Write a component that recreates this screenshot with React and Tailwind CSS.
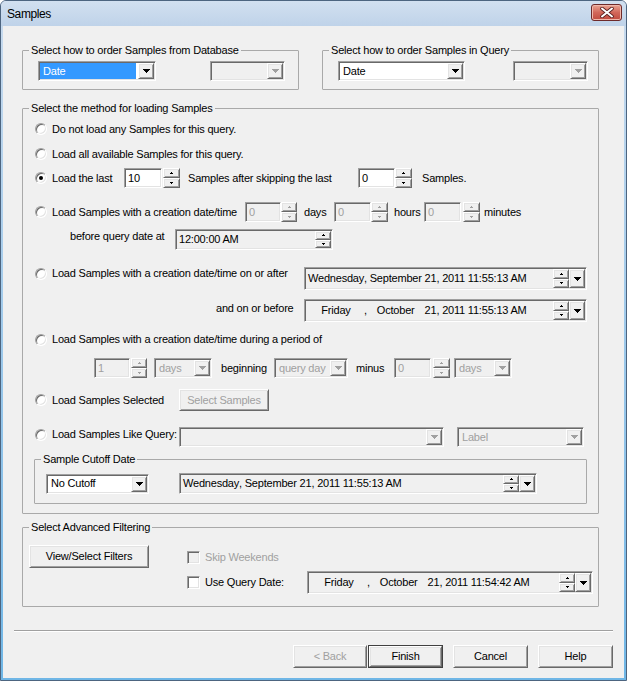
import React from "react";

// classic 3D borders
const sunken =
  "border border-t-[#a0a0a0] border-l-[#a0a0a0] border-b-white border-r-white shadow-[inset_1px_1px_0_#696969,inset_-1px_-1px_0_#e3e3e3]";
const raised =
  "border border-t-white border-l-white border-b-[#696969] border-r-[#696969] shadow-[inset_1px_1px_0_#e3e3e3,inset_-1px_-1px_0_#a0a0a0] bg-[#f0f0f0]";

// pixel triangle used on combo / spinner buttons
const Tri = ({ up, w = 7, color = "#000" }) => {
  const rows = Math.ceil(w / 2);
  return (
    <svg width={w} height={rows} shapeRendering="crispEdges" className="block">
      {Array.from({ length: rows }).map((_, i) => (
        <rect key={i} x={i} y={up ? rows - 1 - i : i} width={w - 2 * i} height={1} fill={color} />
      ))}
    </svg>
  );
};

const UpDown = ({ className = "", disabled }) => {
  const c = disabled ? "#a0a0a0" : "#000";
  return (
    <div className={`flex flex-col shrink-0 ${className}`}>
      <div className={`${raised} flex-1 flex items-center justify-center`}>
        <Tri up w={3} color={c} />
      </div>
      <div className={`${raised} flex-1 flex items-center justify-center`}>
        <Tri w={3} color={c} />
      </div>
    </div>
  );
};

const Spin = ({ value, disabled, inputClass = "w-[37px]", spinClass = "ml-[1px] w-[17px]" }) => (
  <div className="flex h-[20px] shrink-0">
    <div
      className={`${sunken} ${inputClass} px-[3px] flex items-center ${
        disabled ? "bg-[#f0f0f0] text-[#a0a0a0]" : "bg-white"
      }`}
    >
      {value}
    </div>
    <UpDown className={spinClass} disabled={disabled} />
  </div>
);

const Combo = ({ value, className = "", disabled, selected }) => (
  <div
    className={`${sunken} flex p-[1px] shrink-0 ${disabled ? "bg-[#f0f0f0] text-[#a0a0a0]" : "bg-white"} ${className}`}
  >
    <div className="flex-1 flex items-stretch pr-[2px] overflow-hidden">
      {selected ? (
        <span className="flex-1 flex items-center pl-[3px] bg-[#3399ff] text-white">{value}</span>
      ) : (
        <span className="flex items-center pl-[3px]">{value}</span>
      )}
    </div>
    <div className={`${raised} w-[16px] flex items-center justify-center`}>
      <Tri w={7} color={disabled ? "#a0a0a0" : "#000"} />
    </div>
  </div>
);

const DateField = ({ dow, month, rest, className = "" }) => (
  <div className={`${sunken} bg-[#f0f0f0] flex p-[1px] shrink-0 ${className}`}>
    <div className="flex-1 flex items-center pl-[2px] whitespace-nowrap overflow-hidden">
      <span className="inline-block w-[56px] text-center">{dow}</span>
      <span>,&nbsp;</span>
      <span className="inline-block w-[52px] text-center">{month}</span>
      <span>&nbsp;{rest}</span>
    </div>
    <UpDown className="w-[16px]" />
    <div className={`${raised} w-[16px] flex items-center justify-center`}>
      <Tri w={7} />
    </div>
  </div>
);

const Radio = ({ checked }) => (
  <span
    className={`w-[12px] h-[12px] rounded-full bg-white shrink-0 flex items-center justify-center ${sunken}`}
  >
    {checked && <span className="w-[4px] h-[4px] rounded-full bg-black" />}
  </span>
);

const RadioLabel = ({ checked, children, className = "" }) => (
  <div className={`flex items-center shrink-0 ${className}`}>
    <Radio checked={checked} />
    <span className="ml-[5px] whitespace-nowrap">{children}</span>
  </div>
);

const Check = ({ disabled }) => (
  <span className={`w-[13px] h-[13px] shrink-0 ${sunken} ${disabled ? "bg-[#f0f0f0]" : "bg-white"}`} />
);

const Btn = ({ children, className = "", disabled }) => (
  <button
    type="button"
    className={`${raised} flex items-center justify-center shrink-0 ${disabled ? "text-[#a0a0a0]" : ""} ${className}`}
  >
    {children}
  </button>
);

const Group = ({ title, className = "", children }) => (
  <fieldset className={`border border-[#a9a9a9] rounded-[1px] ${className}`}>
    <legend className="ml-[6px] px-[2px] leading-[13px]">{title}</legend>
    {children}
  </fieldset>
);

export default function App() {
  return (
    <div className="w-[627px] h-[681px] flex flex-col border border-[#4d6580] rounded-t-[6px] overflow-hidden bg-linear-to-b from-[#c9dbee] to-[#6fb6e6] font-['Liberation_Sans',Arial,sans-serif] text-[11px] leading-[13px] tracking-[-0.2px] text-black">
      {/* title bar */}
      <div className="h-[25px] flex items-start justify-between pl-[6px] pr-[4px] bg-linear-to-b from-[#d2e0f0] to-[#bfd3e9]">
        <span className="mt-[7px] text-[12px] tracking-[-0.4px]">Samples</span>
        <div className="mt-[3px] w-[31px] h-[17px] rounded-[3px] border border-[#6e2a2a] bg-linear-to-b from-[#e8a493] via-[#d2675a] to-[#c04a3f] flex items-center justify-center shadow-[inset_0_0_0_1px_#f0b8ac]">
          <svg width="14" height="11" viewBox="0 0 14 11">
            <path d="M2 1.5 L12 9.5 M12 1.5 L2 9.5" stroke="#5a2020" strokeWidth="3.6" strokeLinecap="round" />
            <path d="M2 1.5 L12 9.5 M12 1.5 L2 9.5" stroke="#fff" strokeWidth="2" strokeLinecap="round" />
          </svg>
        </div>
      </div>

      {/* client area */}
      <div className="flex-1 mx-[2px] mb-[2px] bg-[#f0f0f0] flex flex-col">
        <div className="pl-[19px] pr-[25px] pt-[18px]">
          {/* order groups */}
          <div className="flex gap-[23px]">
            <Group title="Select how to order Samples from Database" className="w-[277px]">
              <div className="flex pl-[15px] pt-[4px] pb-[8px]">
                <Combo value="Date" selected className="w-[118px] h-[20px]" />
                <Combo disabled className="ml-[54px] w-[75px] h-[20px]" />
              </div>
            </Group>
            <Group title="Select how to order Samples in Query" className="w-[277px]">
              <div className="flex pl-[15px] pt-[4px] pb-[8px]">
                <Combo value="Date" className="w-[127px] h-[20px]" />
                <Combo disabled className="ml-[48px] w-[75px] h-[20px]" />
              </div>
            </Group>
          </div>

          {/* loading method */}
          <Group title="Select the method for loading Samples" className="mt-[12px]">
            <div className="flex flex-col px-[11px] pb-[9px]">
              <div className="mt-[6px] h-[16px] flex items-center pl-[1px]">
                <RadioLabel>Do not load any Samples for this query.</RadioLabel>
              </div>
              <div className="mt-[9px] h-[16px] flex items-center pl-[1px]">
                <RadioLabel>Load all available Samples for this query.</RadioLabel>
              </div>
              <div className="mt-[6px] h-[20px] flex items-center pl-[1px]">
                <RadioLabel checked className="w-[89px]">
                  Load the last
                </RadioLabel>
                <Spin value="10" inputClass="w-[38px]" />
                <span className="ml-[8px] w-[170px] whitespace-nowrap">Samples after skipping the last</span>
                <Spin value="0" inputClass="w-[37px]" spinClass="w-[17px]" />
                <span className="ml-[10px]">Samples.</span>
              </div>
              <div className="mt-[14px] h-[20px] flex items-center pl-[1px]">
                <RadioLabel className="w-[210px]">Load Samples with a creation date/time</RadioLabel>
                <Spin value="0" disabled inputClass="w-[36px]" spinClass="w-[16px]" />
                <span className="ml-[7px] w-[30px]">days</span>
                <Spin value="0" disabled inputClass="w-[37px]" spinClass="w-[17px]" />
                <span className="ml-[6px] w-[30px]">hours</span>
                <Spin value="0" disabled inputClass="w-[37px]" spinClass="ml-[2px] w-[17px]" />
                <span className="ml-[4px]">minutes</span>
              </div>
              <div className="mt-[7px] flex items-start pl-[36px]">
                <span className="mt-[1px] w-[105px]">before query date at</span>
                <div className={`${sunken} bg-[#f0f0f0] flex p-[1px] w-[158px] h-[21px]`}>
                  <div className="flex-1 flex items-center pl-[2px]">12:00:00 AM</div>
                  <UpDown className="w-[16px]" />
                </div>
              </div>
              <div className="mt-[17px] flex items-start pl-[1px]">
                <RadioLabel className="w-[269px] h-[13px]">
                  Load Samples with a creation date/time on or after
                </RadioLabel>
                <DateField
                  dow="Wednesday"
                  month="September"
                  rest="21, 2011 11:55:13 AM"
                  className="w-[283px] h-[23px]"
                />
              </div>
              <div className="mt-[9px] flex items-start pl-[182px]">
                <span className="mt-[3px] w-[88px]">and on or before</span>
                <DateField dow="Friday" month="October" rest="21, 2011 11:55:13 AM" className="w-[283px] h-[23px]" />
              </div>
              <div className="mt-[11px] h-[13px] flex items-center pl-[1px]">
                <RadioLabel>Load Samples with a creation date/time during a period of</RadioLabel>
              </div>
              <div className="mt-[12px] h-[20px] flex items-center pl-[60px]">
                <Spin value="1" disabled inputClass="w-[36px]" spinClass="ml-[1px] w-[16px]" />
                <Combo value="days" disabled className="ml-[7px] w-[58px] h-[20px]" />
                <span className="ml-[9px] w-[53px]">beginning</span>
                <Combo value="query day" disabled className="w-[74px] h-[20px]" />
                <span className="ml-[8px] w-[38px]">minus</span>
                <Spin value="0" disabled inputClass="w-[37px]" spinClass="ml-[2px] w-[17px]" />
                <Combo value="days" disabled className="ml-[4px] w-[58px] h-[20px]" />
              </div>
              <div className="mt-[11px] h-[22px] flex items-center pl-[1px]">
                <RadioLabel className="w-[144px]">Load Samples Selected</RadioLabel>
                <Btn disabled className="w-[90px] h-[22px]">
                  Select Samples
                </Btn>
              </div>
              <div className="mt-[16px] flex items-start pl-[1px]">
                <RadioLabel className="w-[144px] h-[13px] mt-[1px]">Load Samples Like Query:</RadioLabel>
                <Combo disabled className="w-[265px] h-[20px]" />
                <Combo value="Label" disabled className="ml-[13px] w-[127px] h-[20px]" />
              </div>

              {/* cutoff */}
              <Group title="Sample Cutoff Date" className="mt-[6px]">
                <div className="flex items-center pl-[11px] pt-[7px] pb-[9px]">
                  <Combo value="No Cutoff" className="w-[103px] h-[20px]" />
                  <DateField
                    dow="Wednesday"
                    month="September"
                    rest="21, 2011 11:55:13 AM"
                    className="ml-[30px] w-[358px] h-[21px]"
                  />
                </div>
              </Group>
            </div>
          </Group>

          {/* advanced filtering */}
          <Group title="Select Advanced Filtering" className="mt-[7px]">
            <div className="flex pl-[6px] pb-[12px]">
              <Btn className="mt-[11px] w-[120px] h-[23px]">View/Select Filters</Btn>
              <div className="ml-[38px] flex flex-col">
                <div className="mt-[17px] h-[13px] flex items-center">
                  <Check disabled />
                  <span className="ml-[5px] text-[#a0a0a0]">Skip Weekends</span>
                </div>
                <div className="mt-[7px] h-[23px] flex items-center">
                  <Check />
                  <span className="ml-[5px] w-[102px]">Use Query Date:</span>
                  <DateField dow="Friday" month="October" rest="21, 2011 11:54:42 AM" className="w-[286px] h-[23px]" />
                </div>
              </div>
            </div>
          </Group>
        </div>

        {/* footer */}
        <div className="mt-[23px] mx-[11px] border-t border-t-[#a0a0a0] border-b border-b-white" />
        <div className="mt-[13px] flex justify-end pr-[11px]">
          <Btn disabled className="w-[74px] h-[23px]">
            &lt; Back
          </Btn>
          <div className="ml-[1px] w-[75px] h-[23px] border border-[#404040] flex">
            <Btn className="flex-1 h-full">Finish</Btn>
          </div>
          <Btn className="ml-[10px] w-[75px] h-[23px]">Cancel</Btn>
          <Btn className="ml-[10px] w-[75px] h-[23px]">Help</Btn>
        </div>
      </div>
    </div>
  );
}
